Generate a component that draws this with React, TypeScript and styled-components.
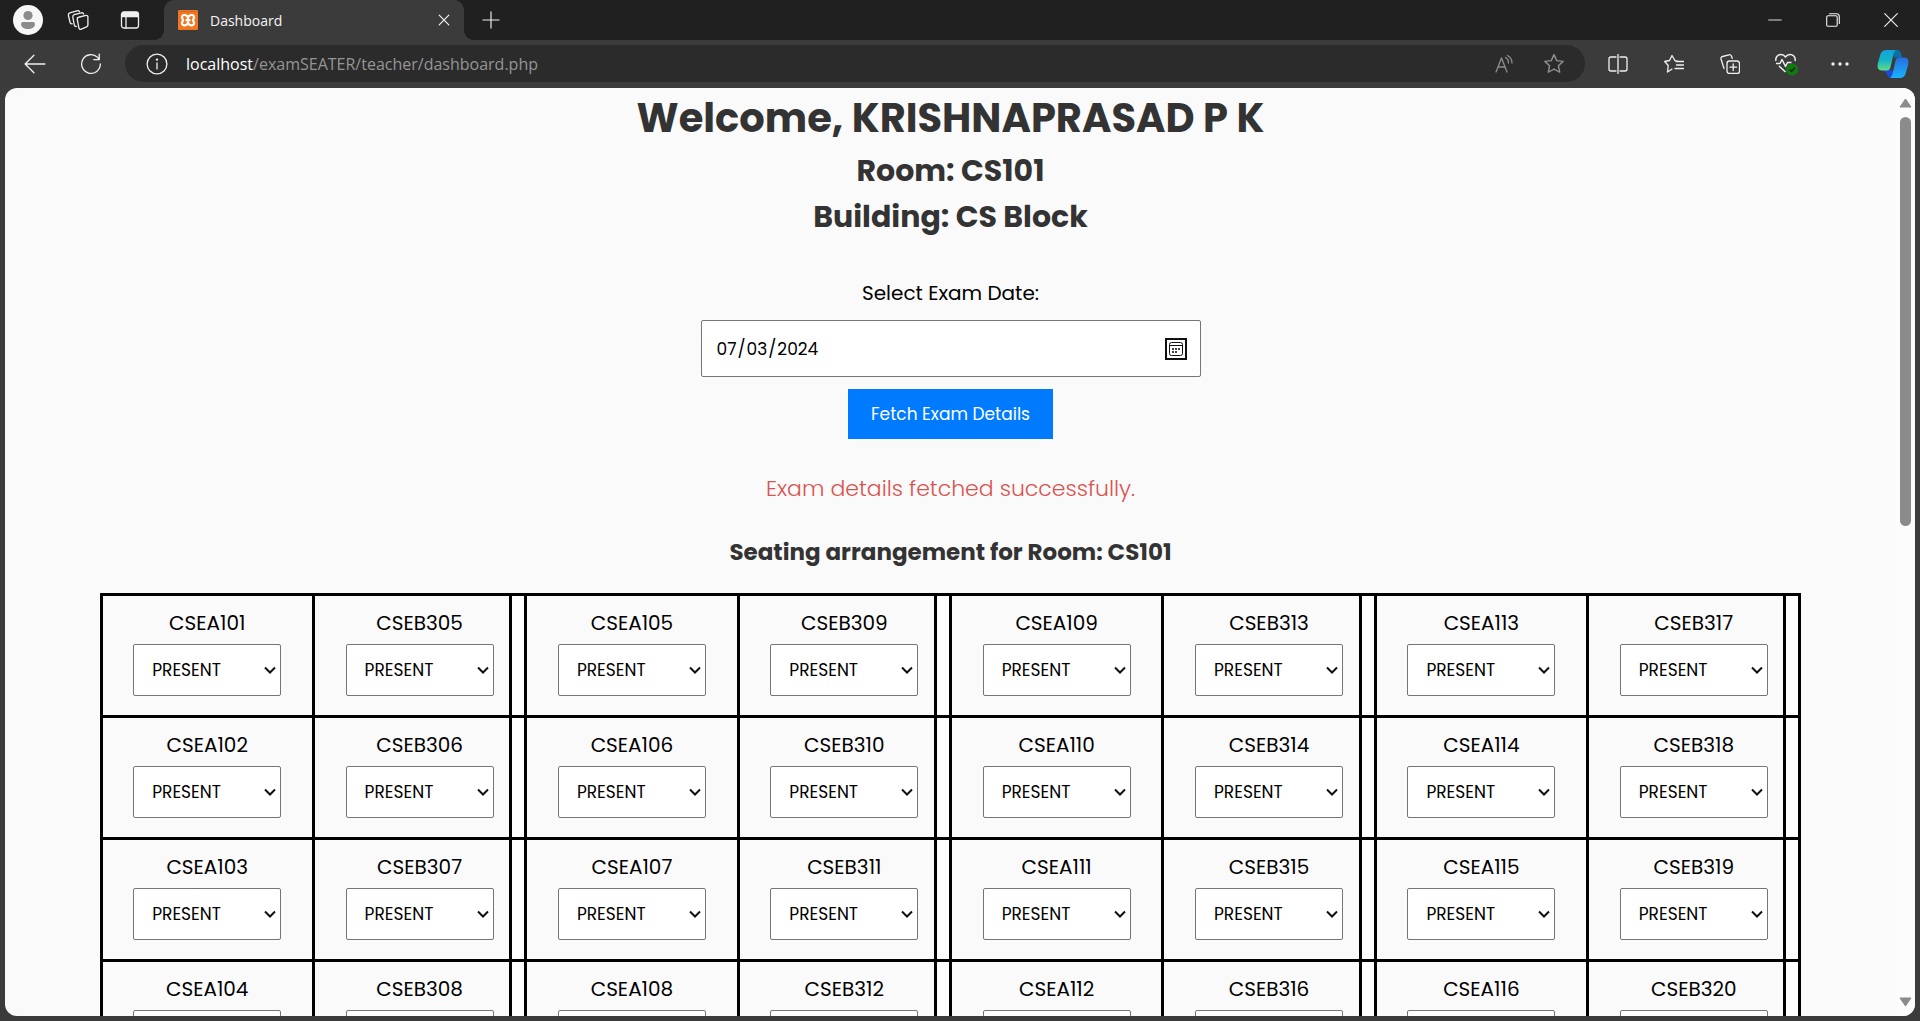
import React, { useState } from "react";
import styled, { createGlobalStyle } from "styled-components";

const ui = `"Segoe UI", "Open Sans", "Noto Sans", sans-serif`;
const brand = `Poppins, Inter, "Open Sans", sans-serif`;

const calendar = encodeURIComponent(
  `<svg xmlns="http://www.w3.org/2000/svg" viewBox="0 0 22 22"><rect x="1" y="1" width="20" height="20" fill="none" stroke="#101010" stroke-width="2"/><rect x="4.5" y="4.5" width="13" height="13" rx="2" fill="none" stroke="#101010"/><path d="M4.500 7.500h13" stroke="#101010"/><path d="M7 10h2v2H7zm3 0h2v2h-2zm3 0h2v2h-2zm-6 3h2v2H7zm3 0h2v2h-2z" fill="#444"/></svg>`
);
const chevron = encodeURIComponent(
  `<svg xmlns="http://www.w3.org/2000/svg" viewBox="0 0 12 8"><path d="M1 1.500l5 5 5-5" fill="none" stroke="#101010" stroke-width="2"/></svg>`
);

const GlobalStyle = createGlobalStyle`
  *, *::before, *::after { box-sizing: border-box; }
  html, body, #root { height: 100%; }
  body { margin: 0; background: #3b3b3b; overflow: hidden; }
`;

const Window = styled.div`
  display: flex;
  flex-direction: column;
  height: 100vh;
  background: #3b3b3b;
  font-family: ${ui};
`;

const TabBar = styled.header`
  display: flex;
  align-items: center;
  height: 40px;
  flex: none;
  background: #202020;
`;

const IconButton = styled.button<{ $w?: number; $h?: number; $muted?: boolean }>`
  display: grid;
  place-items: center;
  flex: none;
  width: ${(p) => p.$w ?? 56}px;
  height: ${(p) => p.$h ?? 40}px;
  padding: 0;
  border: 0;
  background: transparent;
  color: ${(p) => (p.$muted ? "#8f8f8f" : "#f0f0f0")};
  svg { display: block; }
`;

const Tab = styled.div`
  position: relative;
  display: flex;
  align-items: center;
  gap: 12px;
  width: 300px;
  height: 40px;
  margin-left: 4px;
  padding-left: 14px;
  border-radius: 10px 10px 0 0;
  background: #3b3b3b;
  color: #f5f5f5;
  font-size: 14px;
  &::before,
  &::after {
    content: "";
    position: absolute;
    bottom: 0;
    width: 10px;
    height: 10px;
  }
  &::before {
    right: 100%;
    background: radial-gradient(circle at 0 0, transparent 10px, #3b3b3b 10px);
  }
  &::after {
    left: 100%;
    background: radial-gradient(circle at 100% 0, transparent 10px, #3b3b3b 10px);
  }
`;

const TabTitle = styled.span`
  flex: 1;
`;

const Spacer = styled.div`
  flex: 1;
`;

const Toolbar = styled.nav`
  display: flex;
  align-items: center;
  height: 48px;
  flex: none;
  padding: 0 0 1px 7px;
`;

const AddressBar = styled.div`
  display: flex;
  align-items: center;
  flex: 1;
  height: 37px;
  margin: 0 5px 0 6px;
  padding: 0 6px 0 8px;
  border-radius: 19px;
  background: #2b2b2b;
`;

const Address = styled.a`
  flex: 1;
  margin-left: 5px;
  color: #959595;
  font-size: 16px;
  line-height: 20px;
  text-decoration: none;
  b { color: #fff; font-weight: 400; }
`;

const Frame = styled.div`
  display: flex;
  flex: 1;
  min-height: 0;
  margin: 0 5px 5px;
  border-radius: 12px;
  overflow: hidden;
  background: #fafafa;
`;

const Page = styled.main`
  flex: 1;
  overflow: hidden;
  font-family: ${brand};
  text-align: center;
  color: #000;
`;

const Rail = styled.div`
  display: flex;
  flex-direction: column;
  align-items: center;
  flex: none;
  width: 19px;
  padding: 8px 0;
  background: #fcfcfc;
`;

const RailArrow = styled.button`
  display: block;
  flex: none;
  width: 13px;
  height: 13px;
  padding: 0;
  border: 0;
  background: none;
  svg { display: block; }
`;

const Track = styled.div`
  flex: 1;
  width: 11px;
  padding: 8px 0;
`;

const Thumb = styled.div`
  height: 47%;
  border-radius: 6px;
  background: #8b8b8b;
`;

const Welcome = styled.h1`
  margin: 0;
  color: #333;
  font-size: 40px;
  line-height: 60px;
  font-weight: 700;
`;

const Place = styled.h2`
  margin: 0;
  color: #333;
  font-size: 30px;
  line-height: 46px;
  font-weight: 700;
`;

const DateForm = styled.form`
  display: flex;
  flex-direction: column;
  align-items: center;
  margin-top: 36px;
`;

const DateLabel = styled.label`
  font-size: 20px;
  line-height: 34px;
`;

const DateInput = styled.input`
  width: 500px;
  height: 57px;
  margin: 10px 0 12px;
  padding: 0 13px 0 14px;
  border: 1px solid #767676;
  border-radius: 2px;
  background: #fff;
  color: #000;
  font-family: ${brand};
  font-size: 17px;
  &::-webkit-calendar-picker-indicator {
    width: 22px;
    height: 22px;
    padding: 0;
    background: url("data:image/svg+xml,${calendar}") center / 22px 22px no-repeat;
  }
`;

const FetchButton = styled.button`
  height: 50px;
  padding: 0 23px;
  border: 0;
  background: #007bff;
  color: #fff;
  font-family: ${brand};
  font-size: 17px;
`;

const Message = styled.p`
  margin: 33px 0 0;
  color: #d9534f;
  font-size: 22px;
  line-height: 34px;
  font-weight: 300;
`;

const SeatingTitle = styled.h3`
  margin: 28px 0 23px;
  color: #333;
  font-size: 23px;
  line-height: 36px;
  font-weight: 700;
`;

const Seats = styled.table`
  width: 90%;
  margin: 0 auto;
  border: solid #000;
  border-width: 3px 0 0 3px;
  border-spacing: 0;
  table-layout: fixed;
`;

const Seat = styled.td<{ $aisle: boolean }>`
  height: 122px;
  padding: 10px 0 0;
  border: solid #000;
  border-width: 0 3px 3px 0;
  vertical-align: top;
  font-size: 20px;
  background: ${(p) =>
    p.$aisle ? "linear-gradient(to left, #fff 12px, #000 12px, #000 15px, transparent 15px) padding-box" : "none"};
`;

const SeatLabel = styled.label`
  display: block;
  line-height: 34px;
  margin-bottom: 4px;
`;

const Attendance = styled.select`
  appearance: none;
  width: 148px;
  height: 52px;
  padding: 0 0 0 18px;
  border: 1px solid #767676;
  border-radius: 2px;
  background: #fff url("data:image/svg+xml,${chevron}") right 4px center / 12px 8px no-repeat;
  color: #000;
  font-family: ${brand};
  font-size: 17px;
`;

const Line = ({ size = 20, sw = 1.3, children }: { size?: number; sw?: number; children: React.ReactNode }) => (
  <svg width={size} height={size} viewBox="0 0 20 20" fill="none" stroke="currentColor" strokeWidth={sw} strokeLinecap="round" strokeLinejoin="round" aria-hidden="true">
    {children}
  </svg>
);

const starPath = "M10 1.500l2.500 5.400 5.800.7-4.300 4 1.200 5.900-5.200-2.900-5.200 2.900 1.200-5.900-4.300-4 5.800-.7z";

const columns = ["CSEA", "CSEB"];
const seatCode = (row: number, col: number) => {
  const pair = Math.floor(col / 2);
  return `${columns[col % 2]}${(col % 2 ? 305 : 101) + pair * 4 + row}`;
};

function SeatCell({ code, aisle }: { code: string; aisle: boolean }) {
  return (
    <Seat $aisle={aisle}>
      <SeatLabel htmlFor={code}>{code}</SeatLabel>
      <Attendance id={code} defaultValue="PRESENT">
        <option>PRESENT</option>
        <option>ABSENT</option>
      </Attendance>
    </Seat>
  );
}

export default function App() {
  const [date, setDate] = useState("2024-07-03");
  return (
    <Window>
      <GlobalStyle />
      <TabBar>
        <IconButton aria-label="Profile">
          <svg width="30" height="30" viewBox="0 0 30 30"><circle cx="15" cy="15" r="15" fill="#f7f7f7" /><circle cx="15" cy="10.500" r="4.600" fill="#8c8c8c" /><path d="M10 17h10a2 2 0 0 1 2 2c0 3.500-3 5-7 5s-7-1.500-7-5a2 2 0 0 1 2-2z" fill="#8c8c8c" /></svg>
        </IconButton>
        <IconButton $w={44} aria-label="Workspaces">
          <Line size={22} sw={1.2}><path d="M10.500 7.500l6.700-1.700a1.400 1.400 0 0 1 1.800 1.500v7.200c0 1-.4 1.500-1.200 1.800l-4.800 2c-1.200.4-2 0-2.200-1.200L9.300 9.300c-.2-1 .3-1.600 1.200-1.800z" /><path d="M8.500 16c-1.200 0-1.700-.5-1.900-1.500L5.300 7.500c-.2-1.200.2-2 1.200-2.300l6.500-1.700c1-.2 1.800.1 2.200 1M4.700 13.500c-1 0-1.600-.4-1.900-1.300L1.300 6C1 4.800 1.500 4 2.500 3.600l6.500-2c1-.3 1.900 0 2.300.8" /></Line>
        </IconButton>
        <IconButton $w={60} aria-label="Tab actions">
          <Line><rect x="1.500" y="2" width="17" height="16" rx="2.500" /><path d="M2 4.500a2 2 0 0 1 2-2h12a2 2 0 0 1 2 2V6.500H2z" fill="currentColor" /><path d="M6 7v11" /></Line>
        </IconButton>
        <Tab>
          <svg width="20" height="20" viewBox="0 0 20 20" aria-hidden="true"><rect width="20" height="20" rx="1" fill="#f37623" /><path d="M1 1.500h18" stroke="#c96a2c" strokeWidth="1" /><path d="M10 8C9.500 4.500 4 3.800 4 7.200 4 9 5 9 5 10.200S4 11.600 4 13.200c0 3.300 5.500 2.600 6-.9.500 3.500 6 4.200 6 .9 0-1.600-1-1.800-1-3s1-1.200 1-3C16 3.800 10.500 4.500 10 8zM7.500 10.200h5" fill="none" stroke="#fff" strokeWidth="2.200" strokeLinejoin="round" /></svg>
          <TabTitle>Dashboard</TabTitle>
          <IconButton $w={40} aria-label="Close tab"><Line size={12} sw={2}><path d="M2 2l16 16M18 2L2 18" /></Line></IconButton>
        </Tab>
        <IconButton $w={54} aria-label="New tab"><Line size={18}><path d="M10 1v18M1 10h18" /></Line></IconButton>
        <Spacer />
        <IconButton $w={58} aria-label="Minimize"><Line size={14}><path d="M1 10h18" /></Line></IconButton>
        <IconButton $w={58} aria-label="Restore"><Line size={14} sw={1.6}><rect x="1" y="4" width="15" height="15" rx="2" /><path d="M5 1h10a4 4 0 0 1 4 4v10" /></Line></IconButton>
        <IconButton $w={58} aria-label="Close window"><Line size={14} sw={1.6}><path d="M1 1l18 18M19 1L1 19" /></Line></IconButton>
      </TabBar>
      <Toolbar>
        <IconButton aria-label="Back"><Line size={22} sw={1.2}><path d="M19 10H1M9 2l-8 8 8 8" /></Line></IconButton>
        <IconButton aria-label="Refresh"><Line size={22} sw={1.2}><path d="M18.500 10A8.500 8.500 0 1 1 16 4l1.500 2M17.500 1v5h-5" /></Line></IconButton>
        <AddressBar>
          <IconButton $w={48} $h={37} aria-label="Site information"><Line size={22} sw={1.2}><circle cx="10" cy="10" r="9" /><path d="M10 9v5.500" /><circle cx="10" cy="6" r=".5" /></Line></IconButton>
          <Address href="#"><b>localhost</b>/examSEATER/teacher/dashboard.php</Address>
          <IconButton $w={50} $h={37} $muted aria-label="Read aloud"><Line><path d="M2 18L7.500 4 13 18M4 13h7M11.500 3.500c2 1 3 3 3 5.500M13.500 1.500c3 1.500 4.500 4 4.500 7.500" /></Line></IconButton>
          <IconButton $w={50} $h={37} $muted aria-label="Add to favourites"><Line size={22}><path d={starPath} /></Line></IconButton>
        </AddressBar>
        <IconButton aria-label="Split screen"><Line><path d="M8 3H3a2 2 0 0 0-2 2v10a2 2 0 0 0 2 2h5M12 3h5a2 2 0 0 1 2 2v10a2 2 0 0 1-2 2h-5M10 .5v19" /></Line></IconButton>
        <IconButton aria-label="Favourites"><Line><path d="M13 7l-2-.3L8 1.500 5.500 6.500.7 7.500l3.500 4L3.500 18 8 15M12 7.500h7.500M12.500 11h7M11 14.500h8.500" /></Line></IconButton>
        <IconButton aria-label="Collections"><Line><rect x="7" y="7" width="12.500" height="12.500" rx="2.500" /><path d="M13.200 10v6.500M10 13.200h6.500M4 14.500L1 5a2 2 0 0 1 1.500-2.500L9 .8a2 2 0 0 1 2.500 1.500l.7 2" /></Line></IconButton>
        <IconButton aria-label="Browser essentials"><svg width="24" height="24" viewBox="0 0 24 24" fill="none" stroke="currentColor" strokeWidth="1.500" strokeLinejoin="round" aria-hidden="true"><path d="M2 9C1 5 4 2.500 7 2.500c2 0 3.500 1 4.500 2.500 1-1.500 2.500-2.500 4.500-2.500 3 0 6 2.500 5 6.500M2 11.500h4l2-4 3.500 7 2-4h4M5 14l6.500 6" /><circle cx="18" cy="17.500" r="6" fill="#107c10" stroke="none" /><path d="M15.500 17.500l2 2 3.500-4" stroke="#222" /></svg></IconButton>
        <IconButton $w={52} aria-label="Settings and more"><svg width="18" height="4" viewBox="0 0 18 4" fill="currentColor" aria-hidden="true"><circle cx="2" cy="2" r="1.700" /><circle cx="9" cy="2" r="1.700" /><circle cx="16" cy="2" r="1.700" /></svg></IconButton>
        <IconButton $w={54} aria-label="Copilot"><svg width="32" height="28" viewBox="0 0 32 28" aria-hidden="true"><defs><linearGradient id="a" x2="0" y2="1"><stop stopColor="#139fe0" /><stop offset=".5" stopColor="#14b6c4" /><stop offset="1" stopColor="#5fdc8a" /></linearGradient><linearGradient id="b" x2="0" y2="1"><stop stopColor="#2a6ce0" /><stop offset="1" stopColor="#16b4fa" /></linearGradient></defs><path d="M15 0h6c2 0 2.800 2 4 7.500h-8z" fill="#0b6fa8" /><path d="M7 20h8l3 8h-3c-5 0-4.500-4-8-8z" fill="#1c49d8" /><path d="M9 0h11c-2 0-3 2-3.500 4l-3 13c-.5 2-1.500 3.500-3.500 3.500H5c-4 0-5-3-4.200-7L3.500 4C4.500 1.500 6.500 0 9 0z" fill="url(#a)" /><path d="M23 28H12c2 0 3-2 3.500-4l3-13c.5-2 1.500-3.500 3.500-3.500h5c4 0 5 3 4.200 7L28.500 24c-1 2.500-3 4-5.500 4z" fill="url(#b)" /></svg></IconButton>
      </Toolbar>
      <Frame>
        <Page>
          <Welcome>Welcome, KRISHNAPRASAD P K</Welcome>
          <Place>Room: CS101</Place>
          <Place>Building: CS Block</Place>
          <DateForm onSubmit={(e) => e.preventDefault()}>
            <DateLabel htmlFor="exam-date">Select Exam Date:</DateLabel>
            <DateInput id="exam-date" type="date" value={date} onChange={(e) => setDate(e.target.value)} />
            <FetchButton type="submit">Fetch Exam Details</FetchButton>
          </DateForm>
          <Message>Exam details fetched successfully.</Message>
          <SeatingTitle>Seating arrangement for Room: CS101</SeatingTitle>
          <Seats>
            <tbody>
              {[0, 1, 2, 3].map((row) => (
                <tr key={row}>
                  {[0, 1, 2, 3, 4, 5, 6, 7].map((col) => (
                    <SeatCell key={col} code={seatCode(row, col)} aisle={col % 2 === 1} />
                  ))}
                </tr>
              ))}
            </tbody>
          </Seats>
        </Page>
        <Rail>
          <RailArrow aria-label="Scroll up"><svg width="13" height="13" viewBox="0 0 13 13"><path d="M6.500 3L12 11H1z" fill="#8b8b8b" stroke="#8b8b8b" strokeLinejoin="round" /></svg></RailArrow>
          <Track><Thumb /></Track>
          <RailArrow aria-label="Scroll down"><svg width="13" height="13" viewBox="0 0 13 13"><path d="M6.500 11L12 3H1z" fill="#8b8b8b" stroke="#8b8b8b" strokeLinejoin="round" /></svg></RailArrow>
        </Rail>
      </Frame>
    </Window>
  );
}
